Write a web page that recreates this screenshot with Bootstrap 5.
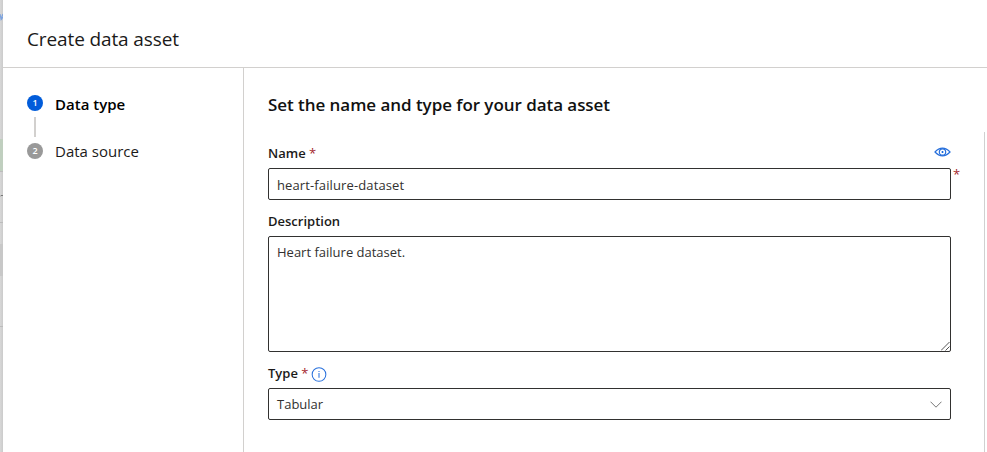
<!DOCTYPE html>
<html lang="en">
<head>
<meta charset="utf-8">
<meta name="viewport" content="width=device-width, initial-scale=1">
<title>Create data asset</title>
<link href="https://cdn.jsdelivr.net/npm/bootstrap@5.3.0/dist/css/bootstrap.min.css" rel="stylesheet">
<style>
body{font-family:"Segoe UI","Open Sans","Noto Sans",sans-serif;font-size:13px;line-height:20px;color:#1b1a19;background:#fff}
/* dimmed page behind the panel */
.backdrop-strip{width:3px;background:linear-gradient(90deg,#d8d8d8,#cbcbcb)}
.bg-link{height:9px;margin-top:13px;width:3px}
.bg-green{height:32px;margin-top:117px;background:#c0cfbf}
.bg-text{height:4px;margin-top:22px}
.bg-rule{height:1px;background:#bcbcbc}
.bg-row{height:32px;margin-top:21px;background:#c8c8c8}
.bg-gap{height:50px}
.panel-head{height:68px;padding:28px 24px 0;border-bottom:1px solid #d2d0ce}
.panel-title{font-size:19px;line-height:22px;letter-spacing:-.12px}
.steps{width:241px;padding:25px 24px;border-right:1px solid #d2d0ce}
.step-item{height:20px;font-size:15px;gap:12px}
.step-item.active{color:#000}
.step-text-current{font-weight:600;padding-top:2px}
.step-num{width:16px;height:16px;border-radius:50%;color:#fff;font-size:9px;line-height:16px;font-weight:600;text-align:center;background:#999}
.step-num.current{background:#015cda}
.step-line{width:2px;height:20px;margin:4px 0 4px 7px;background:#d2d0ce}
.main-title{font-size:17px;line-height:24px;font-weight:600;letter-spacing:-.05px;color:#111;margin:25px 0 15px 24px}
.form-area{border-right:1px solid #d0d0d0;margin-right:2px;padding:11px 0 0 24px}
.fields{width:683px}
.lbl{font-weight:600;height:20px;margin-bottom:5px}
.lbl-next{margin-top:11px}
.req{color:#a4262c;font-weight:400}
.box,.box:focus{font-size:13px;line-height:20px;color:#323130;border:1px solid #323130;border-radius:2px;padding:5px 8px;height:32px;background-color:#fff;box-shadow:none}
.box-line,.box-line:focus{padding:6px 8px 4px;letter-spacing:.12px}
.box-area,.box-area:focus{height:116px;resize:none}
.over-star{left:685px;top:-2px;line-height:16px}
.grip{right:1px;bottom:1px}
.info-icon{margin:4px 0 0 3px}
</style>
</head>
<body class="vh-100 overflow-hidden d-flex">
<div class="backdrop-strip flex-shrink-0 overflow-hidden">
  <svg class="bg-link d-block" viewBox="0 0 3 9"><path d="M0 1l1 5 2-5M1 7L3 4" fill="none" stroke="#7da3de" stroke-width="1.2"/></svg>
  <div class="bg-green"></div><div class="bg-rule"></div>
  <svg class="bg-text d-block" width="3" height="4" viewBox="0 0 3 4"><path d="M0 2.500L1 1.500H3" fill="none" stroke="#777"/></svg>
  <div class="bg-rule mt-4"></div>
  <div class="bg-row"></div><div class="bg-gap"></div><div class="bg-rule"></div>
</div>
<div class="flex-grow-1 d-flex flex-column">
  <header class="panel-head"><h1 class="panel-title fw-normal mb-0">Create data asset</h1></header>
  <div class="d-flex flex-grow-1">
    <nav class="steps flex-shrink-0">
      <div class="step-item active d-flex align-items-center"><span class="step-num current">1</span><span class="step-text-current">Data type</span></div>
      <div class="step-line"></div>
      <div class="step-item d-flex align-items-center"><span class="step-num">2</span><span>Data source</span></div>
    </nav>
    <main class="flex-grow-1 d-flex flex-column">
      <h2 class="main-title">Set the name and type for your data asset</h2>
      <form class="form-area flex-grow-1">
        <div class="fields">
          <div class="lbl d-flex justify-content-between">
            <label for="name">Name <span class="req">*</span></label>
            <svg width="17" height="18" viewBox="0 -2 17 18"><path d="M1 7q3.500-3.800 7.500-3.800T16 7q-3.500 3.800-7.500 3.800T1 7z" fill="none" stroke="#2870dc" stroke-width="1.200"/><circle cx="8.500" cy="7" r="3.200" fill="none" stroke="#2870dc" stroke-width="1.200"/><circle cx="8.500" cy="7" r="1" fill="#015cda"/></svg>
          </div>
          <div class="position-relative">
            <input id="name" class="form-control box box-line" value="heart-failure-dataset">
            <span class="req over-star position-absolute">*</span>
          </div>
          <label class="lbl lbl-next d-block" for="desc">Description</label>
          <div class="position-relative">
            <textarea id="desc" class="form-control box box-area">Heart failure dataset.</textarea>
            <svg class="grip position-absolute" width="9" height="9" viewBox="0 0 9 9"><path d="M0 8.500L8.500 0M4.500 8.500l4-4" stroke="#555" fill="none"/></svg>
          </div>
          <div class="lbl lbl-next d-flex">
            <label for="type">Type <span class="req">*</span></label>
            <svg class="info-icon" width="16" height="15" viewBox="0 0 16 16"><circle cx="8" cy="8" r="7.300" fill="none" stroke="#2870dc" stroke-width="1.100"/><path d="M8 6.500V11.500M8 4.200v1.200" stroke="#2870dc" stroke-width="1.100"/></svg>
          </div>
          <div id="type" class="box d-flex justify-content-between align-items-center" role="combobox" tabindex="0"><span>Tabular</span>
            <svg width="12" height="7" viewBox="0 0 12 7"><path d="M.5.7L6 6.200 11.500.7" fill="none" stroke="#777"/></svg>
          </div>
        </div>
      </form>
    </main>
  </div>
</div>
<script src="https://cdn.jsdelivr.net/npm/bootstrap@5.3.0/dist/js/bootstrap.bundle.min.js"></script>
</body>
</html>
